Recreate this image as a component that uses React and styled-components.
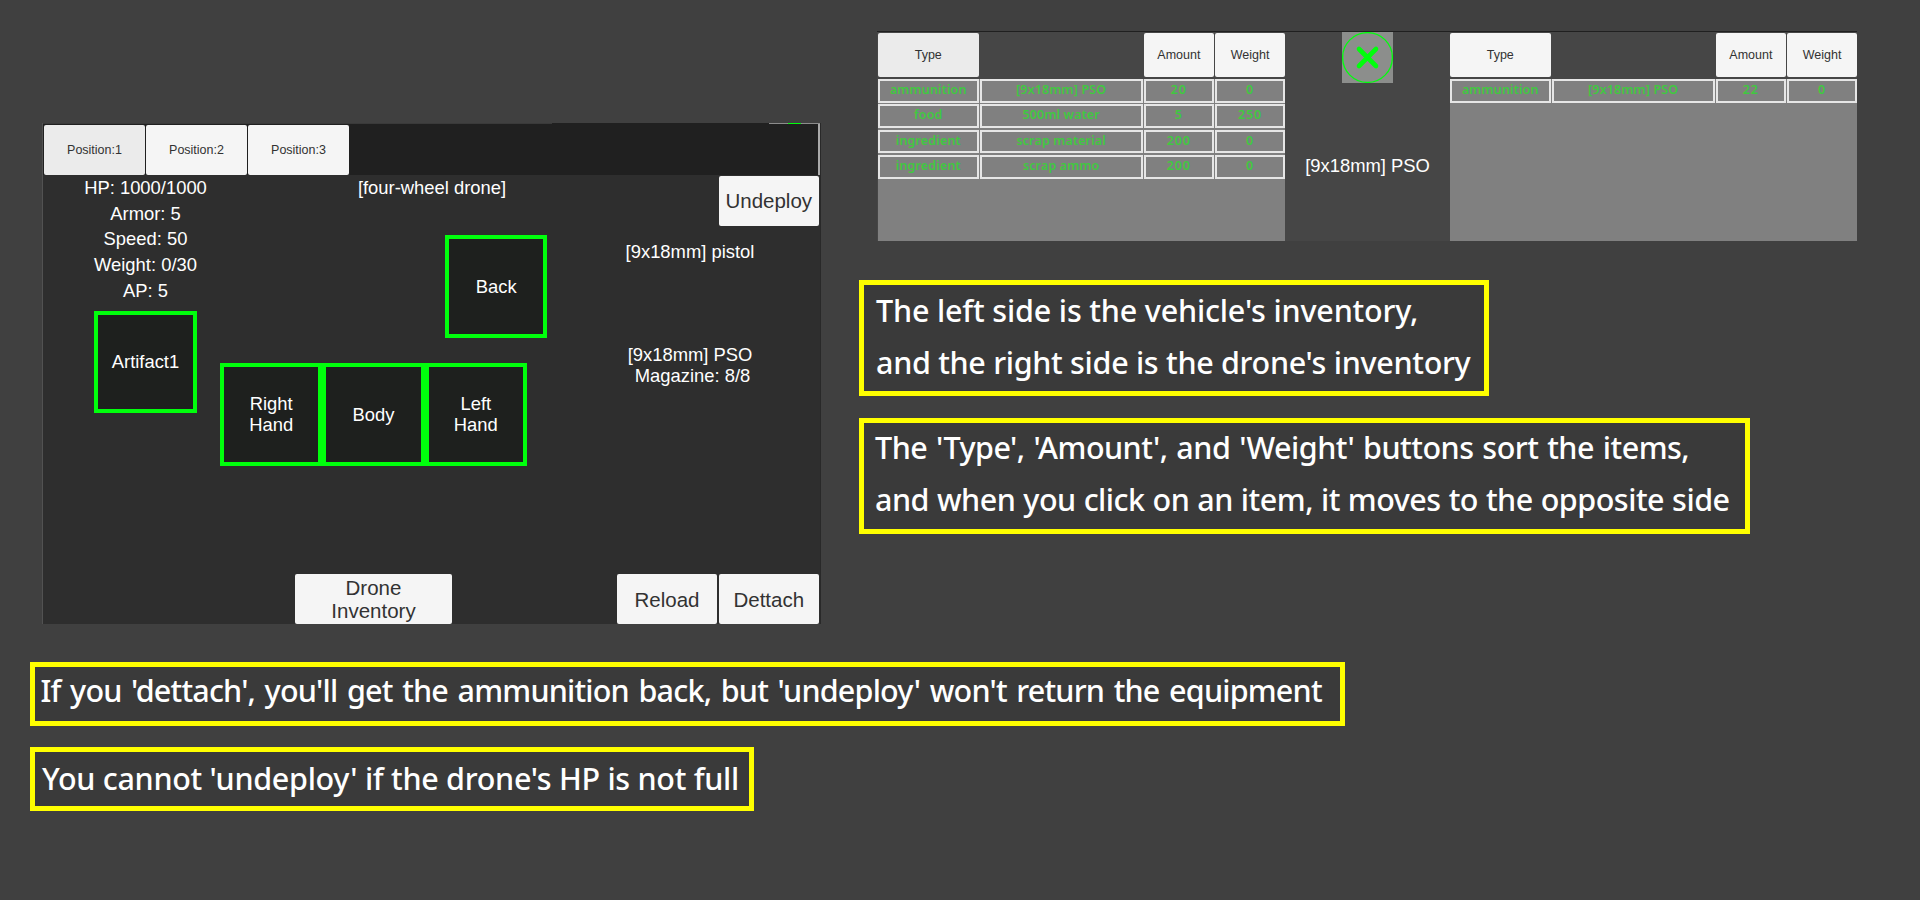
import React from "react";
import styled, { createGlobalStyle } from "styled-components";

const GlobalStyle = createGlobalStyle`
  * { box-sizing: border-box; }
  body { margin: 0; background: #404040; overflow: hidden; }
`;

const Page = styled.div`
  width: 1920px;
  height: 900px;
  background: #404040;
  font-family: "Liberation Sans", Arial, sans-serif;
  color: #fff;
`;

const TopRow = styled.div`
  display: flex;
  height: 662px;
`;

const DronePanel = styled.section`
  width: 779px;
  height: 501px;
  margin: 123px 38px 0 42px;
  background: #2e2e2e;
  border-left: 1px solid #525252;
  border-right: 1px solid #292929;
  display: flex;
  flex-direction: column;
`;

const PanelEdge = styled.div`
  display: flex;
  height: 1px;
  background: #3a3a3a;
  padding-left: 509px;
`;

const EdgePiece = styled.i`
  width: ${(p) => p.$w}px;
  background: ${(p) => p.$color};
`;

const TabBar = styled.div`
  display: flex;
  gap: 1px;
  height: 51px;
  padding: 1px 0 0 1px;
  background: #202020;
  border-right: 2px solid #aaa;
`;

const Button = styled.button`
  display: flex;
  align-items: center;
  justify-content: center;
  width: ${(p) => p.$w || 101}px;
  height: ${(p) => p.$h || 49.6}px;
  padding: ${(p) => p.$drop ?? 1.2}px 0 0;
  border: 0;
  border-radius: 2px;
  background: ${(p) => (p.$active ? "#ebebeb" : "#f5f5f5")};
  color: #323232;
  font: ${(p) => (p.$small ? "12.5px" : "20.5px")} / 23.5px "Liberation Sans", Arial, sans-serif;
  white-space: pre-line;
`;

const PanelBody = styled.div`
  display: flex;
  flex: 1;
`;

const StatsColumn = styled.div`
  width: 177px;
  padding: 0.2px 0 0 28px;
  display: flex;
  flex-direction: column;
  align-items: center;
`;

const Label = styled.div`
  font-size: 18.4px;
  line-height: ${(p) => p.$lh || 25.6}px;
  white-space: pre;
  text-align: center;
`;

const Slot = styled.div`
  display: flex;
  align-items: center;
  justify-content: center;
  width: 102.4px;
  height: 102.6px;
  border: 4px solid #00ff0c;
  background: #1e201e;
  font-size: 18.4px;
  line-height: 21.3px;
  text-align: center;
  white-space: pre-line;
`;

const ArtifactSlot = styled(Slot)`
  margin-top: 7.6px;
`;

const EquipmentColumn = styled.div`
  width: 307px;
  padding-top: 0.3px;
  display: flex;
  flex-direction: column;
`;

const DroneName = styled(Label)`
  width: 307px;
  padding-left: 117px;
`;

const BackSlot = styled(Slot)`
  margin: 34.4px 0 25.2px 225px;
`;

const HandRow = styled.div`
  display: flex;
`;

const InventorySlot = styled.div`
  margin: auto 0 0 75px;
`;

const ActionColumn = styled.div`
  flex: 1;
  display: flex;
  flex-direction: column;
  align-items: flex-end;
  padding: 1px 1px 0 0;
`;

const WeaponInfo = styled.div`
  width: 258px;
  padding-top: 13.6px;
`;

const AmmoInfo = styled.div`
  width: 258px;
  margin-top: 79px;
`;

const ButtonRow = styled.div`
  display: flex;
  gap: 1.3px;
  margin-top: auto;
`;

const RightColumn = styled.div`
  padding-top: 31px;
`;

const Exchange = styled.section`
  display: flex;
  width: 980px;
  height: 210px;
  margin-left: 18px;
  background: #464646;
  border-top: 1px solid #202020;
  padding-left: 1px;
`;

const Inventory = styled.div`
  width: 407px;
  display: flex;
  flex-direction: column;
`;

const columns = "100.5px 163px 70px 70px";

const HeaderRow = styled.div`
  display: grid;
  grid-template-columns: ${columns};
  column-gap: 1.2px;
  height: 47px;
  padding-top: 1px;
`;

const ItemList = styled.div`
  flex: 1;
  background: #808080;
`;

const ItemRow = styled.div`
  display: grid;
  grid-template-columns: ${columns};
  column-gap: 1.2px;
  height: 25.45px;
`;

const Cell = styled.div`
  height: 23.5px;
  border: 2px solid #e6e6e6;
  color: #40c840;
  font: 600 12.6px/18px "Noto Sans", sans-serif;
  letter-spacing: ${(p) => (p.$numeric ? 0.8 : 0.1)}px;
  text-align: center;
  white-space: nowrap;
`;

const Middle = styled.div`
  width: 165px;
  display: flex;
  flex-direction: column;
  align-items: center;
`;

const CloseIcon = styled.svg`
  width: 51px;
  height: 51px;
  background: #8c8e8c;
  margin-bottom: 70px;
`;

const Callout = styled.p`
  width: ${(p) => p.$w}px;
  margin: ${(p) => p.$m};
  padding: 0 0 0 ${(p) => p.$inset}px;
  height: ${(p) => p.$h}px;
  border: 5px solid #ffff00;
  background: #3a3a3a;
  font: 500 30.5px/${(p) => p.$lh || 52}px "Noto Sans", sans-serif;
`;

const Line = styled.span`
  display: block;
  margin-top: ${(p) => p.$lift || 0}px;
  white-space: nowrap;
  letter-spacing: ${(p) => p.$ls || 0}px;
  word-spacing: ${(p) => p.$ws || 0}px;
`;

const vehicleItems = [
  ["ammunition", "[9x18mm] PSO", 20, 0],
  ["food", "500ml water", 5, 250],
  ["ingredient", "scrap material", 200, 0],
  ["ingredient", "scrap ammo", 200, 0],
];
const droneItems = [["ammunition", "[9x18mm] PSO", 22, 0]];

function ItemTable({ items, active }) {
  return (
    <Inventory>
      <HeaderRow>
        <Button $small $w={100.5} $h={44.3} $active={active}>Type</Button>
        <span />
        <Button $small $w={70} $h={44.3}>Amount</Button>
        <Button $small $w={70} $h={44.3}>Weight</Button>
      </HeaderRow>
      <ItemList>
        {items.map((row, i) => (
          <ItemRow key={i}>
            {row.map((v, j) => (
              <Cell key={j} $numeric={j > 1}>{v}</Cell>
            ))}
          </ItemRow>
        ))}
      </ItemList>
    </Inventory>
  );
}

export default function App() {
  return (
    <Page>
      <GlobalStyle />
      <TopRow>
        <DronePanel>
          <PanelEdge>
            <EdgePiece $w={217} $color="#202020" />
            <EdgePiece $w={19} $color="#8c8c8c" />
            <EdgePiece $w={13} $color="#00ff0c" />
            <EdgePiece $w={19} $color="#8c8c8c" />
          </PanelEdge>
          <TabBar>
            <Button $small $active>Position:1</Button>
            <Button $small>Position:2</Button>
            <Button $small>Position:3</Button>
          </TabBar>
          <PanelBody>
            <StatsColumn>
              <Label>HP: 1000/1000</Label>
              <Label>Armor: 5</Label>
              <Label>Speed: 50</Label>
              <Label>Weight: 0/30</Label>
              <Label>AP: 5</Label>
              <ArtifactSlot>Artifact1</ArtifactSlot>
            </StatsColumn>
            <EquipmentColumn>
              <DroneName>[four-wheel drone]</DroneName>
              <BackSlot>Back</BackSlot>
              <HandRow>
                <Slot>{"Right\nHand"}</Slot>
                <Slot>Body</Slot>
                <Slot>{"Left\nHand"}</Slot>
              </HandRow>
              <InventorySlot>
                <Button $w={157} $drop={0.4}>{"Drone\nInventory"}</Button>
              </InventorySlot>
            </EquipmentColumn>
            <ActionColumn>
              <Button $w={100.5} $drop={0.4}>Undeploy</Button>
              <WeaponInfo><Label>[9x18mm] pistol</Label></WeaponInfo>
              <AmmoInfo>
                <Label $lh={21.3}>[9x18mm] PSO</Label>
                <Label $lh={21.3}> Magazine: 8/8</Label>
              </AmmoInfo>
              <ButtonRow>
                <Button $w={100.5} $drop={1.6}>Reload</Button>
                <Button $w={100.5} $drop={1.6}>Dettach</Button>
              </ButtonRow>
            </ActionColumn>
          </PanelBody>
        </DronePanel>
        <RightColumn>
          <Exchange>
            <ItemTable items={vehicleItems} active />
            <Middle>
              <CloseIcon viewBox="0 0 51 51">
                <circle cx="25.5" cy="25.5" r="24.9" fill="none" stroke="#00ff0c" strokeWidth="1.3" />
                <path d="M17 17 L34 34 M34 17 L17 34" stroke="#00ff0c" strokeWidth="4.6" strokeLinecap="round" />
              </CloseIcon>
              <Label>[9x18mm] PSO</Label>
            </Middle>
            <ItemTable items={droneItems} />
          </Exchange>
          <Callout $w={630} $h={116} $m="39px 0 22px" $inset={12} $lh={51.6}>
            <Line $ls={-0.18}>The left side is the vehicle's inventory,</Line>
            <Line $ls={-0.31}>and the right side is the drone's inventory</Line>
          </Callout>
          <Callout $w={891} $h={116} $m="0" $inset={11}>
            <Line $ls={-0.51} $ws={1.4} $lift={-2}>The 'Type', 'Amount', and 'Weight' buttons sort the items,</Line>
            <Line $ls={-0.49} $ws={0.5}>and when you click on an item, it moves to the opposite side</Line>
          </Callout>
        </RightColumn>
      </TopRow>
      <Callout $w={1315} $h={64} $m="0 0 21px 30px" $inset={5.5} $lh={47.5}>
        <Line $ls={-0.8} $ws={2.4}>If you 'dettach', you'll get the ammunition back, but 'undeploy' won't return the equipment</Line>
      </Callout>
      <Callout $w={724} $h={64} $m="0 0 0 30px" $inset={7}>
        <Line $ls={-0.3}>You cannot 'undeploy' if the drone's HP is not full</Line>
      </Callout>
    </Page>
  );
}
